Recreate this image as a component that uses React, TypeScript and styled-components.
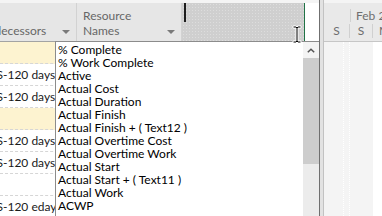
import React from 'react';
import styled, { createGlobalStyle } from 'styled-components';

const GlobalStyle = createGlobalStyle`
  html, body { margin: 0; padding: 0; background: #fff; overflow: hidden; }
  body { font-family: Lato, "Liberation Sans", sans-serif; }
  * { box-sizing: border-box; }
`;

const Screen = styled.div`
  display: flex;
  width: 382px;
  height: 216px;
  overflow: hidden;
  background: #fff;
`;

const GridPane = styled.div`
  position: relative;
  width: 319px;
  flex: none;
  display: flex;
  flex-direction: column;
  overflow: hidden;
`;

const HeaderRow = styled.div`
  display: flex;
  flex: none;
  height: 42px;
  border-top: 3px solid #f4f4f4;
  border-bottom: 1px solid #a3a3a3;
`;

const HeadCol = styled.div<{ $w: number }>`
  width: ${(p) => p.$w}px;
  flex: none;
  display: flex;
  align-items: flex-end;
  justify-content: space-between;
  background: #e6e6e6;
  border-right: 1px solid #d2d2d2;
  padding: 0 6px 3px 0;
  overflow: hidden;
  color: #666;
  font-size: 12px;
  line-height: 15px;
`;

const HeadLabel = styled.span<{ $indent: number }>`
  margin-left: ${(p) => p.$indent}px;
  white-space: nowrap;
`;

const DropArrow = styled.span`
  flex: none;
  width: 0;
  height: 0;
  margin-bottom: 4px;
  border-left: 4px solid transparent;
  border-right: 4px solid transparent;
  border-top: 4px solid #7a7a7a;
`;

const AddCol = styled.div`
  width: 123px;
  flex: none;
  background-color: #cfcfcf;
  background-image: radial-gradient(rgba(255, 255, 255, 0.3) 0.6px, transparent 0.8px);
  background-size: 3px 3px;
  border-right: 1px solid #217346;
  display: flex;
  align-items: flex-start;
`;

const InsertBar = styled.span`
  width: 2px;
  height: 19px;
  margin-left: 2px;
  background: #1e1e1e;
`;

const HeadBlank = styled.div`
  flex: 1;
  background: #fff;
`;

const Body = styled.div`
  flex: 1;
  display: flex;
  flex-direction: column;
`;

const Row = styled.div<{ $summary?: boolean }>`
  height: 22px;
  flex: none;
  display: flex;
  align-items: center;
  background: ${(p) => (p.$summary ? '#fdf3d0' : '#fff')};
  border-bottom: 1px dashed #d6d6d6;
`;

const PredCell = styled.div`
  width: 55px;
  flex: none;
  overflow: hidden;
  color: #1a1a1a;
  font-size: 12px;
  white-space: nowrap;
`;

const RowText = styled.span`
  display: inline-block;
  margin-left: -17px;
`;

const Dropdown = styled.div`
  position: absolute;
  left: 55px;
  top: 41px;
  width: 264px;
  bottom: 0;
  display: flex;
  background: #fff;
  border-top: 1px solid #8c8c8c;
  border-left: 1px solid #8c8c8c;
`;

const List = styled.ul`
  flex: 1;
  margin: 0;
  padding: 1px 0 0 2px;
  list-style: none;
`;

const Item = styled.li`
  height: 13px;
  line-height: 13px;
  font-size: 12px;
  color: #000;
  white-space: nowrap;
`;

const Scrollbar = styled.div`
  width: 16px;
  flex: none;
  display: flex;
  flex-direction: column;
  background: #ececec;
`;

const ScrollButton = styled.div`
  height: 16px;
  flex: none;
  display: flex;
  align-items: center;
  justify-content: center;
  background: #f4f4f4;
`;

const Thumb = styled.div`
  height: 106px;
  flex: none;
  background: #cdcdcd;
`;

const SplitBar = styled.div`
  width: 5px;
  flex: none;
  background: #e2e2e2;
  border-left: 1px solid #6f6f6f;
  border-right: 1px solid #c2c2c2;
`;

const TimePane = styled.div`
  flex: 1;
  display: flex;
  flex-direction: column;
  overflow: hidden;
`;

const TimeHeader = styled.div`
  height: 42px;
  flex: none;
  display: flex;
  flex-direction: column;
  background: #e9e9e9;
  border-top: 3px solid #f4f4f4;
  border-bottom: 1px solid #c6c6c6;
  color: #6e6e6e;
  font-size: 12px;
`;

const Tier = styled.div`
  height: 19px;
  flex: none;
  display: flex;
  align-items: flex-end;
  white-space: nowrap;
  overflow: hidden;
`;

const WeekCell = styled.div<{ $w: number; $sep?: boolean }>`
  width: ${(p) => p.$w}px;
  flex: none;
  height: ${(p) => (p.$sep ? 13 : 19)}px;
  line-height: 13px;
  padding-left: 5px;
  border-left: ${(p) => (p.$sep ? '1px solid #d0d0d0' : 'none')};
`;

const DayCell = styled.div<{ $w: number }>`
  width: ${(p) => p.$w}px;
  flex: none;
  height: 14px;
  line-height: 14px;
  text-align: center;
  border-right: 1px solid #d0d0d0;
  margin-bottom: 3px;
`;

const TimeBody = styled.div`
  flex: 1;
  display: flex;
`;

const Weekend = styled.div`
  width: 49px;
  flex: none;
  background: #f4f4f4;
  display: flex;
  padding-left: 19px;
`;

const DotLine = styled.div`
  width: 7px;
  flex: none;
  border-left: 1px dotted #ffffff;
  border-right: 1px dotted #ffffff;
`;

const Cursor = styled.svg`
  position: absolute;
  left: 292px;
  top: 25px;
`;

const items = [
  '% Complete',
  '% Work Complete',
  'Active',
  'Actual Cost',
  'Actual Duration',
  'Actual Finish',
  'Actual Finish + ( Text12 )',
  'Actual Overtime Cost',
  'Actual Overtime Work',
  'Actual Start',
  'Actual Start + ( Text11 )',
  'Actual Work',
  'ACWP',
];

const rows: { summary?: boolean; text?: string }[] = [
  { summary: true },
  { text: '5SS-120 days' },
  { text: '5SS-120 days' },
  { summary: true },
  { text: '5SS-120 days' },
  { text: '5SS-120 days' },
  {},
  { text: '5SS-120 edays' },
];

export default function App() {
  return (
    <>
      <GlobalStyle />
      <Screen>
        <GridPane>
          <HeaderRow>
            <HeadCol $w={77}>
              <HeadLabel $indent={-23}>Predecessors</HeadLabel>
              <DropArrow />
            </HeadCol>
            <HeadCol $w={105}>
              <HeadLabel $indent={6}>
                Resource
                <br />
                Names
              </HeadLabel>
              <DropArrow />
            </HeadCol>
            <AddCol>
              <InsertBar />
            </AddCol>
            <HeadBlank />
          </HeaderRow>
          <Body>
            {rows.map((r, i) => (
              <Row key={i} $summary={r.summary}>
                <PredCell>{r.text && <RowText>{r.text}</RowText>}</PredCell>
              </Row>
            ))}
          </Body>
          <Dropdown>
            <List>
              {items.map((t) => (
                <Item key={t}>{t}</Item>
              ))}
            </List>
            <Scrollbar>
              <ScrollButton>
                <svg width="8" height="5" viewBox="0 0 8 5">
                  <path d="M0.8 4.3 L4 1.2 L7.2 4.3" fill="none" stroke="#555" strokeWidth="1.5" />
                </svg>
              </ScrollButton>
              <Thumb />
            </Scrollbar>
          </Dropdown>
          <Cursor width="10" height="19" viewBox="0 0 10 19">
            <path
              d="M1 1 H4 L5 2 L6 1 H9 V3 H6 V16 H9 V18 H6 L5 17 L4 18 H1 V16 H4 V3 H1 Z"
              fill="#000"
              stroke="#fff"
              strokeWidth="1"
            />
          </Cursor>
        </GridPane>
        <SplitBar />
        <TimePane>
          <TimeHeader>
            <Tier>
              <WeekCell $w={26} />
              <WeekCell $w={40} $sep>
                Feb 2
              </WeekCell>
            </Tier>
            <Tier>
              <DayCell $w={26}>S</DayCell>
              <DayCell $w={23}>S</DayCell>
              <DayCell $w={24}>M</DayCell>
            </Tier>
          </TimeHeader>
          <TimeBody>
            <Weekend>
              <DotLine />
            </Weekend>
          </TimeBody>
        </TimePane>
      </Screen>
    </>
  );
}
